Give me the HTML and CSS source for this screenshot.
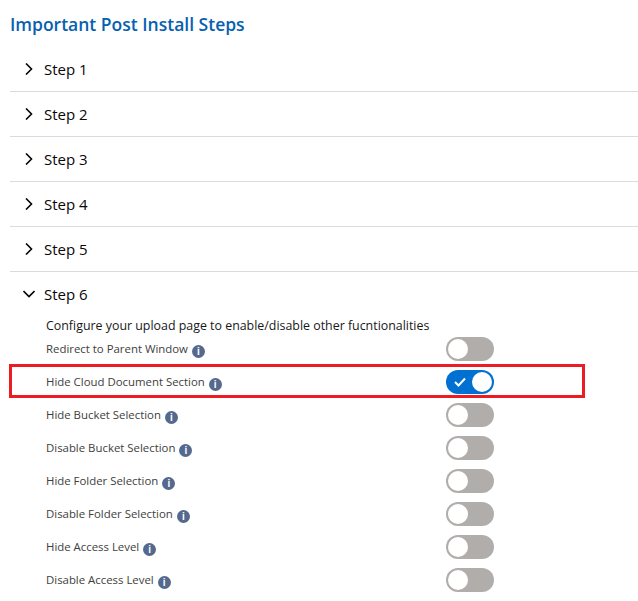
FILE: index.html
```html
<!DOCTYPE html>
<html lang="en">

<head>
    <meta charset="UTF-8" />
    <meta name="viewport" content="width=device-width, initial-scale=1.0" />
    <title>Important Post Install Steps</title>
    <link rel="stylesheet" href="styles.css">
</head>

<body>
    <h1 class="title">Important Post Install Steps</h1>

    <div class="step">
        <svg class="chevron" viewBox="0 0 12 12"><path d="M3 .5 L8.5 6 L3 11.5" /></svg>
        <span>Step 1</span>
    </div>
    <div class="step">
        <svg class="chevron" viewBox="0 0 12 12"><path d="M3 .5 L8.5 6 L3 11.5" /></svg>
        <span>Step 2</span>
    </div>
    <div class="step">
        <svg class="chevron" viewBox="0 0 12 12"><path d="M3 .5 L8.5 6 L3 11.5" /></svg>
        <span>Step 3</span>
    </div>
    <div class="step">
        <svg class="chevron" viewBox="0 0 12 12"><path d="M3 .5 L8.5 6 L3 11.5" /></svg>
        <span>Step 4</span>
    </div>
    <div class="step">
        <svg class="chevron" viewBox="0 0 12 12"><path d="M3 .5 L8.5 6 L3 11.5" /></svg>
        <span>Step 5</span>
    </div>
    <div class="step step-open">
        <svg class="chevron" viewBox="0 0 12 12"><path d="M.5 3 L6 8.5 L11.5 3" /></svg>
        <span>Step 6</span>
    </div>

    <div class="panel">
        <p class="intro">Configure your upload page to enable/disable other fucntionalities</p>

        <div class="setting">
            <label>Redirect to Parent Window <i class="info">i</i></label>
            <span class="toggle"><span class="knob"></span></span>
        </div>
        <div class="setting setting-marked">
            <label>Hide Cloud Document Section <i class="info">i</i></label>
            <span class="toggle toggle-on">
                <svg class="check" viewBox="0 0 12 10"><path d="M1 5 L4.5 8.5 L11 1.5" /></svg>
                <span class="knob"></span>
            </span>
        </div>
        <div class="setting">
            <label>Hide Bucket Selection <i class="info">i</i></label>
            <span class="toggle"><span class="knob"></span></span>
        </div>
        <div class="setting">
            <label>Disable Bucket Selection <i class="info">i</i></label>
            <span class="toggle"><span class="knob"></span></span>
        </div>
        <div class="setting">
            <label>Hide Folder Selection <i class="info">i</i></label>
            <span class="toggle"><span class="knob"></span></span>
        </div>
        <div class="setting">
            <label>Disable Folder Selection <i class="info">i</i></label>
            <span class="toggle"><span class="knob"></span></span>
        </div>
        <div class="setting">
            <label>Hide Access Level <i class="info">i</i></label>
            <span class="toggle"><span class="knob"></span></span>
        </div>
        <div class="setting">
            <label>Disable Access Level <i class="info">i</i></label>
            <span class="toggle"><span class="knob"></span></span>
        </div>
    </div>
</body>

</html>
```
FILE: styles.css
```css
body {
    margin: 0;
    padding: 0 0 0 10px;
    background-color: #fff;
    color: #080707;
    font-family: 'Open Sans', 'Noto Sans', sans-serif;
    overflow: hidden;
}

.title {
    margin: 0;
    height: 47px;
    line-height: 49px;
    font-size: 17.5px;
    font-weight: 600;
    color: #0561b0;
}

.step {
    display: flex;
    align-items: center;
    height: 44px;
    border-bottom: 1px solid #dddbda;
    padding-left: 13px;
    font-size: 15px;
}

.step-open {
    border-bottom: none;
}

.chevron {
    width: 12px;
    height: 12px;
    margin-right: 9px;
    fill: none;
    stroke: #080707;
    stroke-width: 1.6;
}

.panel {
    padding-left: 36px;
}

.intro {
    margin: 0;
    height: 17px;
    line-height: 20px;
    font-size: 12.4px;
    color: #181818;
}

.setting {
    display: flex;
    align-items: center;
    height: 33px;
    padding: 4px 0 5px;
    box-sizing: border-box;
    position: relative;
}

.setting label {
    width: 400px;
    font-size: 11.4px;
    color: #3e3e3c;
}

.setting-marked::after {
    content: "";
    position: absolute;
    left: -37px;
    top: -2px;
    width: 576px;
    height: 34px;
    border: 3px solid #ed1c24;
    box-sizing: border-box;
}

.info {
    display: inline-block;
    width: 13px;
    height: 13px;
    margin-left: 1px;
    border-radius: 50%;
    background-color: #54698d;
    color: #fff;
    font-family: 'Liberation Sans', sans-serif;
    font-size: 10px;
    font-style: normal;
    font-weight: 700;
    line-height: 13px;
    text-align: center;
    vertical-align: -2px;
}

.toggle {
    display: flex;
    align-items: center;
    width: 48px;
    height: 24px;
    border-radius: 12px;
    background-color: #b0adab;
    padding: 2px;
    box-sizing: border-box;
}

.knob {
    width: 20px;
    height: 20px;
    border-radius: 50%;
    background-color: #fff;
}

.toggle-on {
    justify-content: space-between;
    background-color: #0070d2;
    padding-left: 8px;
}

.check {
    width: 12px;
    height: 10px;
    fill: none;
    stroke: #fff;
    stroke-width: 2;
}
```
